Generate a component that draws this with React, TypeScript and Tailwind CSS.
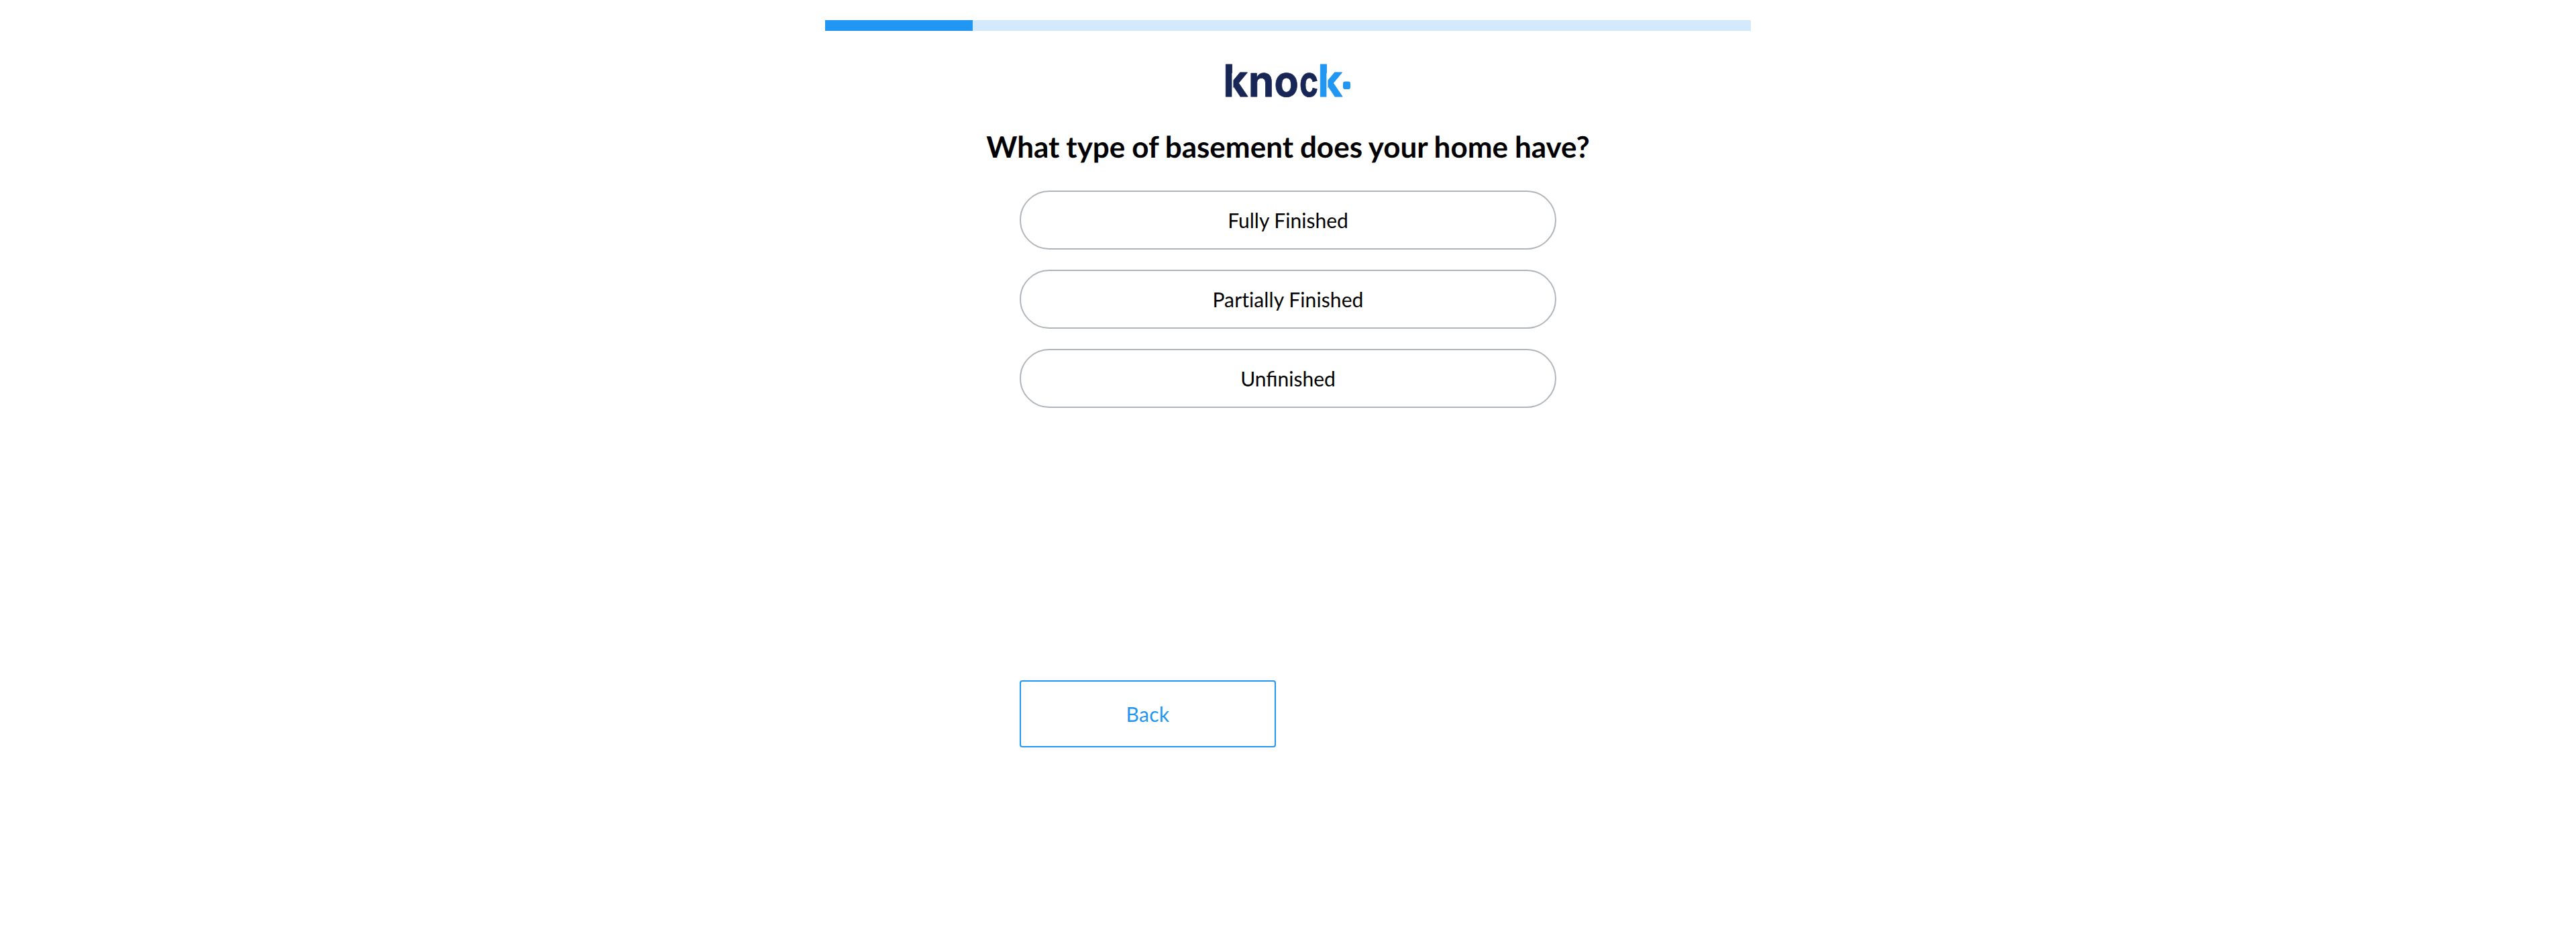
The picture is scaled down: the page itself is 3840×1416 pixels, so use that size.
const options = ['Fully Finished', 'Partially Finished', 'Unfinished'];

function ProgressBar() {
  return (
    <div className="h-4 w-[1380px] bg-[#d2e9fe]">
      <div className="h-full w-[220px] bg-[#2196f3]" />
    </div>
  );
}

function Logo() {
  return (
    <svg
      className="mt-[32px] block h-[90px] w-[200px] shrink-0"
      viewBox="0 -14 200 90"
      role="img"
      aria-label="knock"
      fontFamily="Inter, sans-serif"
      fontSize="64"
      fontWeight="700"
      strokeLinejoin="round"
      strokeWidth="0.8"
    >
      <g fill="#182656" stroke="#182656">
        <text transform="translate(3.3 52.2) scale(1 1.03)">k</text>
        <text transform="translate(40.9 52.2) scale(0.96 1)">n</text>
        <text transform="translate(79.5 52.2) scale(0.925 1)">o</text>
        <text transform="translate(117 52.2) scale(0.75 1)">c</text>
      </g>
      <text transform="translate(144.3 52.2) scale(1 1.03)" fill="#2196f3" stroke="#2196f3">
        k
      </text>
      {/* gap between each k's stem and its chevron */}
      <rect x="16.4" y="17" width="2" height="37" fill="#fff" />
      <rect x="157.4" y="17" width="2" height="37" fill="#fff" />
      <rect x="182" y="29.5" width="11" height="11.5" rx="3" fill="#2196f3" />
    </svg>
  );
}

export default function App() {
  return (
    <main className="flex h-[1416px] w-full flex-col items-center bg-white pt-[30px] font-['Lato',sans-serif] text-black [text-rendering:geometricPrecision]">
      <ProgressBar />
      <Logo />
      <h1 className="mt-[25px] text-[44px] leading-[52px] font-bold whitespace-nowrap [word-spacing:-0.86px]">
        What type of basement does your home have?
      </h1>
      <div className="mt-[39px] flex w-[800px] flex-col gap-[30px]">
        {options.map((label) => (
          <button
            key={label}
            className="h-[88px] w-full rounded-full border-2 border-[#b0b5b9] text-[30px] leading-[44px] nth-2:tracking-[0.1px] nth-2:[font-variant-ligatures:none]"
          >
            {label}
          </button>
        ))}
      </div>
      <div className="mt-[406px] flex w-[800px]">
        <button className="h-[100px] w-[382px] rounded-[4px] border-2 border-[#2196f3] text-[30px] leading-[44px] tracking-[0.3px] text-[#2196f3]">
          Back
        </button>
      </div>
    </main>
  );
}
